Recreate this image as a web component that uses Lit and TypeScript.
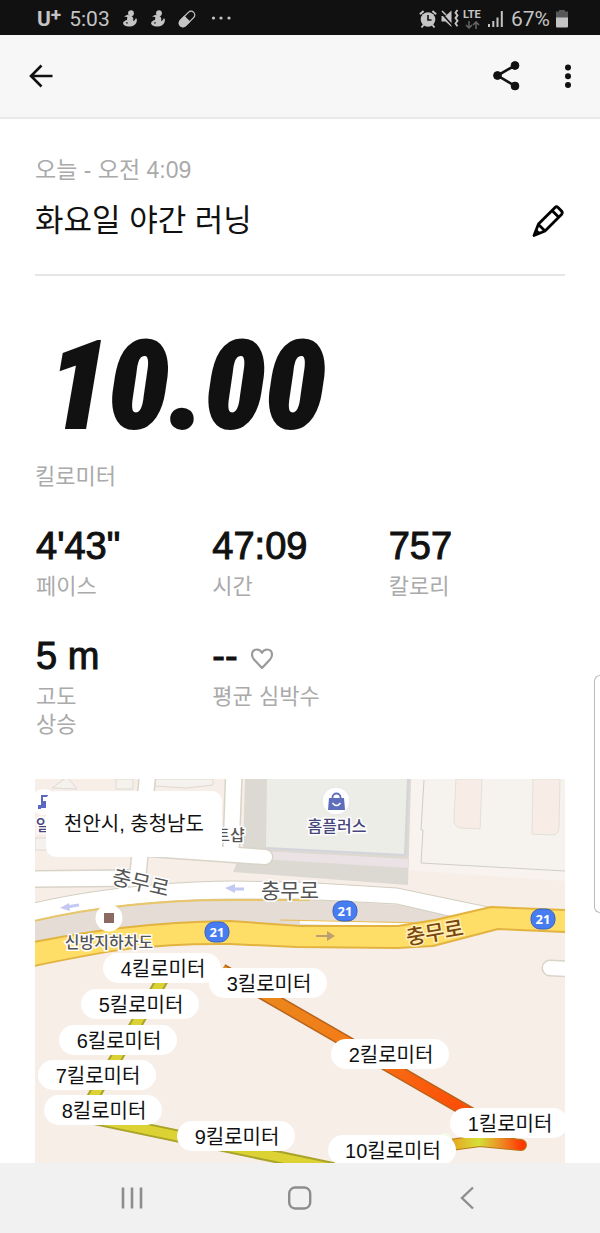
import { LitElement, html, svg, css } from "lit";
import { customElement, property } from "lit/decorators.js";

const reset = css`
  * { box-sizing: border-box; }
  :host { display: block; }
  svg { display: block; }
  button { appearance: none; border: 0; margin: 0; padding: 0; background: none; color: inherit; font: inherit; cursor: pointer; }
`;

@customElement("status-bar")
class StatusBar extends LitElement {
  static styles = [reset, css`
    .bar { display: flex; align-items: center; justify-content: space-between; height: 35px; padding: 2px 32px 0 37px; background: #111; color: #c4c4c4; font-family: Roboto, sans-serif; font-size: 21px; line-height: 32px; }
    .side { display: flex; align-items: center; }
    .left { gap: 12px; }
    .right { gap: 4px; }
    .ids { display: flex; gap: 8px; }
    .carrier { display: flex; font-family: Roboto, sans-serif; font-weight: 700; font-size: 21px; }
    .plus { font-size: 19px; line-height: 24px; }
    .net { font: 700 11px/12px Roboto, sans-serif; width: 20px; }
  `];
  figure() {
    return svg`<svg width="16" height="18" viewBox="0 0 16 18" fill="#c4c4c4" aria-hidden="true">
      <circle cx="9" cy="3.200" r="2.900"/>
      <path d="M2 6.400 5.500 4.800 9 6c2.500.8 2.600 3 2 5 1.300-.1 2.200-.9 2.500-2.500l1.300.3c.6 4-2 7.700-6.500 7.700C4 17 1.300 15.500 1 13c.8-1.700 2.400-2.700 4-3L5.300 7Z"/>
      <path d="m3.500 12.800 2.200-.9-.4 2Z" fill="#111"/></svg>`;
  }
  render() {
    return html`<div class="bar">
      <div class="side left">
        <div class="ids"><span class="carrier">U<span class="plus">+</span></span><span>5:03</span></div>
        ${this.figure()}${this.figure()}
        <svg width="18" height="18" viewBox="0 0 18 18" aria-hidden="true"><g transform="rotate(45 9 9)"><rect x="5.300" y="-.4" width="7.400" height="18.800" rx="3.700" fill="none" stroke="#c4c4c4" stroke-width="1.300"/><path d="M4.700 8.500h8.600v6.200a4.300 4.300 0 0 1-8.600 0Z" fill="#c4c4c4"/></g></svg>
        <svg width="24" height="18" viewBox="0 0 24 18" fill="#c4c4c4" aria-hidden="true"><circle cx="5.500" cy="8" r="1.600"/><circle cx="13" cy="8" r="1.600"/><circle cx="21" cy="8" r="1.600"/></svg>
      </div>
      <div class="side right">
        <svg width="18" height="20" viewBox="0 0 18 20" fill="none" stroke="#c4c4c4" aria-hidden="true"><circle cx="9" cy="10.500" r="7.300" fill="#c4c4c4" stroke="none"/><path d="M9 6v5h3.500" stroke="#111" stroke-width="1.600"/><path d="M.9 5.200 4.600 2M17.100 5.200 13.400 2M4.500 16 2.500 18.500M13.500 16l2 2.500" stroke-width="2"/></svg>
        <svg width="18" height="20" viewBox="0 0 18 20" fill="none" stroke="#c4c4c4" aria-hidden="true"><path d="M.5 7h4l6-5.500v16.500l-6-5.500h-4Z" fill="#c4c4c4" stroke="none"/><path d="M0 3.500 12 17" stroke="#111" stroke-width="1.600"/><path d="M1 2l4 4" stroke-width="1.600"/><path d="m16.500 1-2 2.700 2 2.700-2 2.700 2 2.700-2 2.700 2 2.700" stroke-width="1.900"/></svg>
        <div class="net">LTE<svg width="20" height="8" viewBox="0 0 20 8" fill="none" stroke="#666" stroke-width="1.500" aria-hidden="true"><path d="M6 0v7M3 4l3 3 3-3M13 8V1M10 4l3-3 3 3"/></svg></div>
        <svg width="20" height="18" viewBox="0 0 20 18" fill="#c4c4c4" aria-hidden="true"><path d="M1 14h2v3H1zM5.300 11h2v6h-2zM9.500 7.500h2V17h-2zM13.800 1h2v16h-2z"/></svg>
        <span>67%</span>
        <svg width="14" height="18" viewBox="0 0 14 18" aria-hidden="true"><path d="M5 0h6v1.500h3V8H2V1.500h3Z" fill="#585858"/><path d="M2 7.500h12V16.500q0 1-1 1H3q-1 0-1-1Z" fill="#c4c4c4"/></svg>
      </div>
    </div>`;
  }
}

@customElement("app-bar")
class AppBar extends LitElement {
  static styles = [reset, css`
    .bar { display: flex; align-items: center; justify-content: space-between; height: 84px; padding: 0 20px 0 24px; background: #f7f7f7; border-bottom: 2px solid #e9e9e9; }
    .actions { display: flex; gap: 34px; }
  `];
  render() {
    return html`<header class="bar">
      <button aria-label="뒤로"><svg width="34" height="34" viewBox="0 0 34 34" fill="none" stroke="#111" stroke-width="2.600"><path d="M28.500 17H7M17.500 6.500 7 17l10.500 10.500"/></svg></button>
      <div class="actions">
        <button aria-label="공유"><svg width="34" height="34" viewBox="0 0 34 34" fill="#111" stroke="#111"><path d="M27 6.500 9.500 16.500 27 27" fill="none" stroke-width="2.600"/><circle cx="27" cy="6.500" r="3.900"/><circle cx="9.500" cy="16.500" r="3.900"/><circle cx="27" cy="27" r="3.900"/></svg></button>
        <button aria-label="더보기"><svg width="24" height="34" viewBox="0 0 24 34" fill="#111"><circle cx="12" cy="8.500" r="3"/><circle cx="12" cy="17.200" r="3"/><circle cx="12" cy="26" r="3"/></svg></button>
      </div>
    </header>`;
  }
}

interface Pin { km: number; x: number; y: number; w: number; }

@customElement("route-map")
class RouteMap extends LitElement {
  static styles = [reset, css`
    .map { position: relative; overflow: hidden; background: #f7eee8; }
    .canvas { width: 100%; height: auto; font-family: "Liberation Sans", "Noto Sans CJK KR", sans-serif; }
    .place { position: absolute; left: 11px; top: 12px; padding: 16px 18px; border-radius: 10px; background: #fff; color: #111; font: 20px/34px "Liberation Sans", "Noto Sans CJK KR", sans-serif; }
    .pin { font-size: 20px; fill: #111; text-anchor: middle; }
    .street { font-size: 21px; fill: #555; stroke: #fff; stroke-width: 3px; paint-order: stroke; text-anchor: middle; }
    .avenue { fill: #7a470c; stroke: #ffeeb8; font-weight: 500; }
    .poi { font-size: 16px; font-weight: 500; fill: #555; stroke: #fff; stroke-width: 3px; paint-order: stroke; text-anchor: middle; font-family: "Noto Sans CJK KR", sans-serif; }
    .shop { fill: #46467c; }
    .shield { font: 700 13px "Noto Sans", sans-serif; fill: #fff; text-anchor: middle; }
  `];
  pins: Pin[] = [
    { km: 4, x: 162, y: 968, w: 118 }, { km: 3, x: 268, y: 983, w: 118 },
    { km: 5, x: 140, y: 1004, w: 118 }, { km: 6, x: 118, y: 1040, w: 118 },
    { km: 7, x: 97, y: 1075, w: 118 }, { km: 8, x: 103, y: 1110, w: 118 },
    { km: 9, x: 236, y: 1136, w: 118 }, { km: 2, x: 390, y: 1054, w: 118 },
    { km: 10, x: 392, y: 1150, w: 128 }, { km: 1, x: 509, y: 1123, w: 118 },
  ];
  shields = [[217, 932], [345, 911], [543, 919]];
  render() {
    return html`<div class="map">
      <svg class="canvas" viewBox="35 779 530 384" role="img" aria-label="러닝 경로 지도">
        <defs>
          <linearGradient id="fast" gradientUnits="userSpaceOnUse" x1="222" y1="970" x2="515" y2="1139"><stop offset="0" stop-color="#e58e1c"/><stop offset=".45" stop-color="#f47a18"/><stop offset=".8" stop-color="#fc4f08"/></linearGradient>
          <linearGradient id="finish" gradientUnits="userSpaceOnUse" x1="450" y1="1145" x2="522" y2="1145"><stop offset="0" stop-color="#e8a020"/><stop offset=".4" stop-color="#d4e038"/><stop offset=".75" stop-color="#f08020"/><stop offset="1" stop-color="#ff3800"/></linearGradient>
        </defs>
        <g fill="#f5f1ec" stroke="#ded9d2">
          <path d="M155 779h58v6l-27 3-31-2ZM116 779h17v10h-17ZM52 788l15-11 10 12ZM35 838h14v12H35Z"/>
        </g>
        <path d="M411 779h154v102l-157-11Z" fill="#f8f3ef"/>
        <path d="M424 779h141v92l-143-8V831l-2-1Z" fill="#f6f3ee"/>
        <path d="M424 780l-3 50h2l-2 33 144 8" fill="none" stroke="#cfcdca"/>
        <path d="M456 779h26l-2 50-19-1q-7-1-7-8ZM533 779h27l-1 50q-1 6-7 6l-20-1Z" fill="#f7ede6" stroke="#e4ded8"/>
        <path d="M245 779h166l-3 106-175-13 10-24Z" fill="#dcd8d2"/>
        <path d="M267 779h141l-3 76-139-7Z" fill="#ecede6"/>
        <path d="M266 848l139 7 3-76" fill="none" stroke="#d3d4dc" stroke-width="2"/>
        <path d="M262 851l146 8v9l-148-9Z" fill="#eae2e4"/>
        <g fill="none" stroke="#d8d4c8" stroke-linecap="round" stroke-linejoin="round">
          <path d="M234 770l-3 83M148 770l-11 115" stroke-width="18"/>
          <path d="M150 849l115 8" stroke-width="17"/>
          <path d="M30 879l110-1" stroke-width="18"/>
          <path d="M550 968l20 1" stroke-width="17"/>
        </g>
        <g fill="none" stroke="#fff" stroke-linecap="round" stroke-linejoin="round">
          <path d="M234 770l-3 83M148 770l-11 115" stroke-width="15"/>
          <path d="M150 849l115 8" stroke-width="14"/>
          <path d="M30 879l110-1" stroke-width="15"/>
          <path d="M550 968l20 1" stroke-width="14"/>
        </g>
        <path d="M30 921C100 905 150 900 230 899h70l98 6 62 11-40 12-130-2H230L120 936 30 950Z" fill="#e4dcd5"/>
        <path d="M34 903C80 892 150 882 230 881l70 1 97 6 96 20-40 9-56-13-97-5H230C150 900 90 908 34 921Z" fill="#fff" stroke="#d2cec0"/>
        <path d="M34 921C90 908 150 900 230 900h80" fill="none" stroke="#e8c668" stroke-width="2"/>
        <path d="M300 922l125 3" stroke="#fff" stroke-width="4"/>
        <path d="M280 920l145 3" stroke="#e9bc4c"/>
        <path d="M34 942C90 931 150 922 230 921l70 5h98l37-6 56-13 75 3v22l-68-3-65 17-36 2-100-1-67-3C150 943 110 950 34 966Z" fill="#ffde67" stroke="#e3b340" stroke-width="2" stroke-linejoin="round"/>
        <g fill="none" stroke="#c3c9f2" stroke-width="3"><path d="M79 905l-13 2M244 889h-13"/></g>
        <path d="M60 908l9-5 1 8ZM225 888l10-4v9Z" fill="#c3c9f2"/>
        <path d="M316 936h13" stroke="#b9a06e" stroke-width="2"/><path d="M327 931l8 5-8 5Z" fill="#b9a06e"/>

        <circle cx="44" cy="802" r="13" fill="#fff"/>
        <path d="M41 795h8v13h-8ZM38 805h3v4h-3Z" fill="#5a68c0"/><path d="M43 797h4v4h-4Z" fill="#fff"/>
        <text class="poi shop" x="43" y="831">일</text>
        <text class="poi" x="230" y="841">트샵</text>
        <circle cx="336" cy="801" r="14" fill="#fff" stroke="#e6e6e6"/>
        <path d="M329 798h15l1 12h-17Z" fill="#5f6dbd"/><path d="M332.500 799v-1.500a4 4 0 0 1 8 0v1.500" fill="none" stroke="#5f6dbd" stroke-width="1.800"/><path d="M332.500 803q4 5 8 0" fill="none" stroke="#fff" stroke-width="1.600"/>
        <text class="poi shop" x="337" y="832">홈플러스</text>
        <circle cx="109" cy="918" r="13.500" fill="#fff"/><path d="M104 913h10v10h-10Z" fill="#8c6a62"/>
        <text class="poi" x="109" y="948">신방지하차도</text>
        <text class="street" transform="translate(139 890) rotate(13)">충무로</text>
        <text class="street" x="290" y="898">충무로</text>
        <text class="street avenue" transform="translate(436 940) rotate(-10)">충무로</text>
        ${this.shields.map(([x, y]) => svg`<rect x=${x - 12} y=${y - 10} width="24" height="20" rx="9" fill="#477df0" stroke="#3762c4"/><text class="shield" x=${x} y=${y + 5}>21</text>`)}

        <g fill="none" stroke-linejoin="round">
          <path d="M222 970 515 1139" stroke="#b8621a" stroke-width="13"/>
          <path d="M222 970 515 1139" stroke="url(#fast)" stroke-width="10"/>
          <path d="M168 970 82 1116 340 1170" stroke="#a9a328" stroke-width="13"/>
          <path d="M168 970 82 1116 340 1170" stroke="#dcd234" stroke-width="9"/>
          <path d="M450 1145 480 1141 521 1145" stroke="#b87818" stroke-width="12" stroke-linecap="round"/>
          <path d="M450 1145 480 1141 521 1145" stroke="url(#finish)" stroke-width="10" stroke-linecap="round"/>
        </g>
        <circle cx="445" cy="1140" r="7" fill="#f1fbe9"/>
        ${this.pins.map((p) => svg`<rect x=${p.x - p.w / 2} y=${p.y - 15} width=${p.w} height="30" rx="15" fill="#fff"/><text class="pin" x=${p.x + 1} y=${p.y + 8}>${p.km}킬로미터</text>`)}
      </svg>
      <div class="place">천안시, 충청남도</div>
    </div>`;
  }
}

@customElement("nav-bar")
class NavBar extends LitElement {
  static styles = [reset, css`
    .bar { display: grid; grid-template-columns: repeat(3, 168px); justify-content: center; height: 70px; background: #f1f1f1; }
    .key { display: grid; place-items: center; }
  `];
  render() {
    return html`<nav class="bar">
      <button class="key" aria-label="최근 앱"><svg width="28" height="28" viewBox="0 0 28 28" stroke="#8d8d8d" stroke-width="2.600"><path d="M5 3.500v21M14 3.500v21M23 3.500v21"/></svg></button>
      <button class="key" aria-label="홈"><svg width="28" height="28" viewBox="0 0 28 28" fill="none" stroke="#8d8d8d" stroke-width="2.400"><rect x="3.200" y="3.500" width="21" height="21" rx="6"/></svg></button>
      <button class="key" aria-label="뒤로"><svg width="28" height="28" viewBox="0 0 28 28" fill="none" stroke="#8d8d8d" stroke-width="2.400"><path d="M19 3.500 8 14l11 10.500"/></svg></button>
    </nav>`;
  }
}

@customElement("run-stat")
class RunStat extends LitElement {
  @property() value = "";
  @property() label = "";
  static styles = [reset, css`
    .value { display: flex; align-items: center; gap: 12px; font-size: 38px; line-height: 44px; color: #111; -webkit-text-stroke: 1px #111; }
    .label { margin-top: 5px; font-size: 22px; line-height: 28px; color: #aaa; white-space: pre-line; }
  `];
  render() {
    return html`<div class="value">${this.value}<slot></slot></div><div class="label">${this.label}</div>`;
  }
}

@customElement("app-root")
class AppRoot extends LitElement {
  static styles = [reset, css`
    :host { position: relative; min-height: 100vh; background: #fff; color: #111; font-family: "Liberation Sans", "Noto Sans CJK KR", sans-serif; }
    .content { padding: 37px 35px 0; }
    .date { font-size: 23px; line-height: 28px; color: #aaa; }
    .heading { display: flex; align-items: center; justify-content: space-between; padding: 17px 0 33px; border-bottom: 2px solid #e5e5e5; }
    .title { margin: 0; font-size: 31px; font-weight: 400; line-height: 40px; }
    .distance { margin-top: 65px; padding-left: 13px; font: italic 900 122px/92px "Roboto Condensed", Roboto, sans-serif; -webkit-text-stroke: 2px #111; }
    .unit { margin-top: 30px; font-size: 22px; line-height: 28px; color: #aaa; }
    .stats { display: grid; grid-template-columns: repeat(3, 1fr); row-gap: 33px; margin: 33px 0 40px; padding-left: 1px; }
    .edge { position: absolute; right: 0; top: 675px; width: 6px; height: 238px; border: 1px solid #bbb; border-right: 0; border-radius: 8px 0 0 8px; background: #fff; }
  `];
  render() {
    return html`
      <status-bar></status-bar>
      <app-bar></app-bar>
      <main class="content">
        <div class="date">오늘 - 오전 4:09</div>
        <div class="heading">
          <h1 class="title">화요일 야간 러닝</h1>
          <button aria-label="제목 편집"><svg width="34" height="34" viewBox="0 0 34 34" fill="none" stroke="#000" stroke-width="2.800" stroke-linejoin="round"><path d="M3 31.500 7.500 20 23.800 3.700Q25.500 2 27.300 3.700L30.500 7Q32 8.800 30.500 10.500L14 27Z"/><path d="M21 6.500 27.800 13.300M7.500 20.500 14 27M5 26.500l3.500 3"/></svg></button>
        </div>
        <div class="distance">10.00</div>
        <div class="unit">킬로미터</div>
        <div class="stats">
          <run-stat value="4'43&quot;" label="페이스"></run-stat>
          <run-stat value="47:09" label="시간"></run-stat>
          <run-stat value="757" label="칼로리"></run-stat>
          <run-stat value="5 m" .label=${"고도\n상승"}></run-stat>
          <run-stat value="--" label="평균 심박수"><svg width="24" height="26" viewBox="0 0 24 24" fill="none" stroke="#999" stroke-width="2.200" stroke-linejoin="round" aria-hidden="true"><path d="M12 24 4 15.500Q2 13.200 2 10.500C2 7.500 4 5.500 6.800 5.500 9 5.500 11 6.700 12 8.800 13 6.700 15 5.500 17.200 5.500 20 5.500 22 7.500 22 10.500Q22 13.200 20 15.500Z"/></svg></run-stat>
        </div>
        <route-map></route-map>
      </main>
      <nav-bar></nav-bar>
      <div class="edge"></div>
    `;
  }
}
